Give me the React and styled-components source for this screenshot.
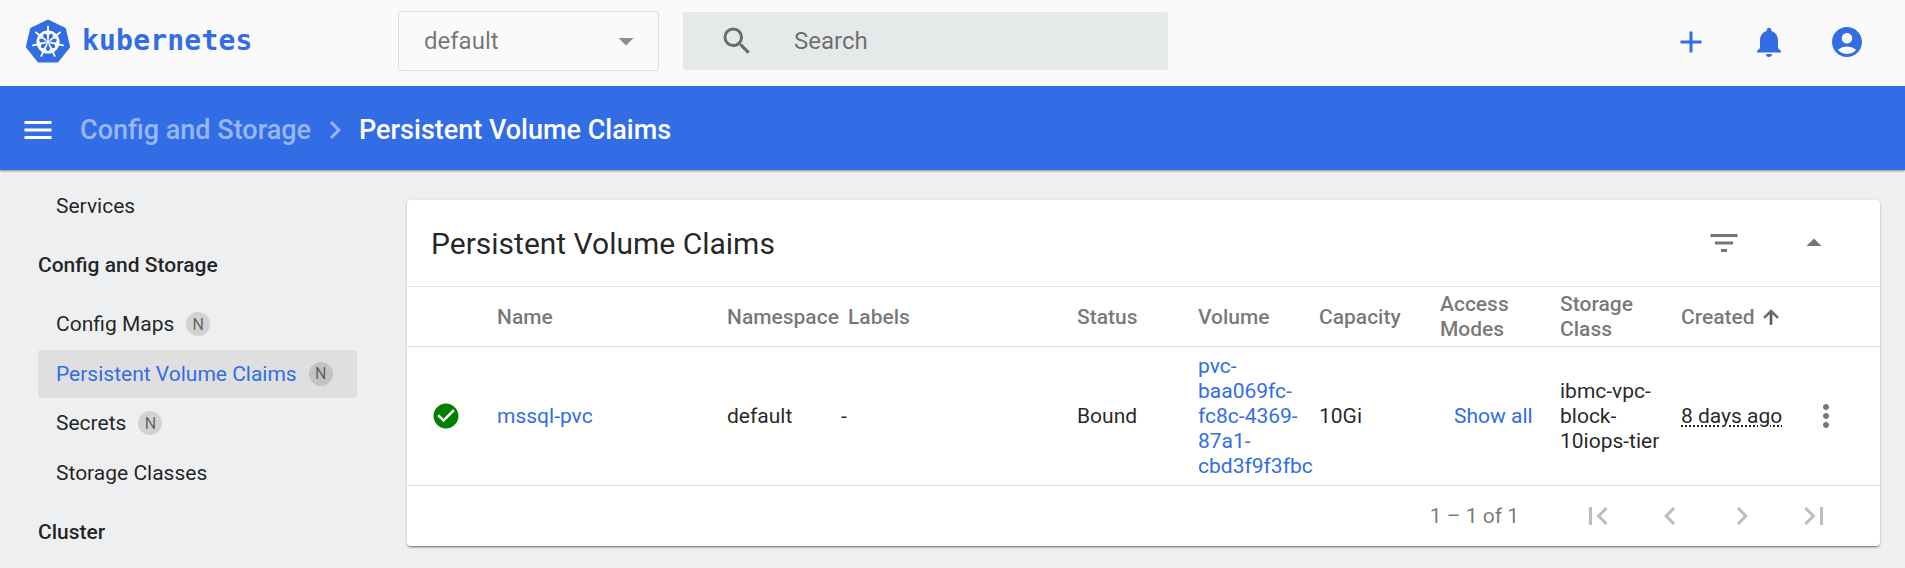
import React from 'react';
import styled, { createGlobalStyle } from 'styled-components';
import {
  MdAdd,
  MdNotifications,
  MdAccountCircle,
  MdFilterList,
  MdArrowDropUp,
  MdArrowDropDown,
  MdFirstPage,
  MdLastPage,
  MdChevronLeft,
  MdChevronRight,
  MdMoreVert,
  MdCheckCircle,
  MdSearch,
  MdMenu,
  MdArrowUpward,
} from 'react-icons/md';

const BLUE = '#326de6';

const GlobalStyle = createGlobalStyle`
  html, body {
    margin: 0;
    padding: 0;
    height: 100%;
    overflow: hidden;
    background: #eeeff1;
    font-family: Roboto, 'Liberation Sans', sans-serif;
    color: rgba(0, 0, 0, 0.87);
  }
  * { box-sizing: border-box; }
`;

const Page = styled.div`
  width: 1905px;
  height: 568px;
  display: flex;
  flex-direction: column;
  overflow: hidden;
`;

const TopBar = styled.header`
  height: 86px;
  flex: none;
  display: flex;
  align-items: center;
  padding: 0 40px 4px 25px;
  background: #fafafa;
`;

const Brand = styled.div`
  width: 373px;
  flex: none;
  display: flex;
  align-items: center;
  gap: 11px;
  color: ${BLUE};
`;

const Wordmark = styled.span`
  font-family: 'DejaVu Sans Mono', monospace;
  font-weight: 700;
  font-size: 28px;
  line-height: 44px;
  letter-spacing: 0.2px;
`;

const NamespaceSelect = styled.div`
  width: 261px;
  height: 60px;
  flex: none;
  display: flex;
  align-items: center;
  justify-content: space-between;
  padding: 0 14px 0 25px;
  border: 1px solid #dcdcdc;
  border-radius: 3px;
  font-size: 24px;
  color: rgba(0, 0, 0, 0.54);
  svg { color: #8f8f8f; }
`;

const SearchBox = styled.div`
  width: 485px;
  height: 58px;
  flex: none;
  margin-left: 24px;
  display: flex;
  align-items: center;
  gap: 39px;
  padding: 0 36px;
  background: #e6e9e9;
  border-radius: 2px;
  font-size: 24px;
  color: rgba(0, 0, 0, 0.54);
`;

const TopActions = styled.div`
  margin: 2px 0 0 auto;
  display: flex;
  gap: 42px;
  color: ${BLUE};
`;

const Crumbs = styled.div`
  height: 84px;
  flex: none;
  display: flex;
  align-items: center;
  padding: 3px 0 0 20px;
  background: ${BLUE};
  color: #fff;
  font-size: 27px;
  font-weight: 500;
  box-shadow: 0 1px 2px rgba(0, 0, 0, 0.45);
  position: relative;
`;

const CrumbParent = styled.span`
  margin-left: 24px;
  color: rgba(255, 255, 255, 0.5);
`;

const CrumbSeparator = styled.span`
  display: flex;
  margin: 0 6px;
  color: rgba(255, 255, 255, 0.5);
`;

const Body = styled.div`
  flex: 1;
  display: flex;
  min-height: 0;
`;

const Sidebar = styled.nav`
  width: 407px;
  flex: none;
  padding: 12px 50px 0 38px;
  display: flex;
  flex-direction: column;
  gap: 1.5px;
`;

const SectionTitle = styled.div`
  height: 48px;
  flex: none;
  margin: 9.5px 0;
  display: flex;
  align-items: center;
  font-size: 21px;
  font-weight: 500;
`;

const NavItem = styled.div`
  height: 48px;
  flex: none;
  display: flex;
  align-items: center;
  gap: 12px;
  padding-left: 18px;
  border-radius: 3px;
  font-size: 21px;
  background: ${(p) => (p.$active ? '#dfdfdf' : 'transparent')};
  color: ${(p) => (p.$active ? BLUE : 'rgba(0, 0, 0, 0.87)')};
`;

const Badge = styled.span`
  width: 24px;
  height: 24px;
  border-radius: 50%;
  display: flex;
  align-items: center;
  justify-content: center;
  background: rgba(0, 0, 0, 0.12);
  color: rgba(0, 0, 0, 0.54);
  font-size: 16px;
`;

const Content = styled.main`
  flex: 1;
  padding: 30px 25px 0 0;
`;

const Card = styled.section`
  height: 346px;
  display: flex;
  flex-direction: column;
  background: #fff;
  border-radius: 4px;
  box-shadow: 0 2px 2px -1px rgba(0, 0, 0, 0.45), 0 1px 3px rgba(0, 0, 0, 0.2);
`;

const CardHeader = styled.div`
  height: 87px;
  flex: none;
  display: flex;
  align-items: center;
  justify-content: space-between;
  padding: 0 48px 0 24px;
  border-bottom: 1px solid #e0e0e0;
`;

const CardTitle = styled.h2`
  margin: 0;
  font-size: 30px;
  font-weight: 400;
`;

const CardActions = styled.div`
  display: flex;
  gap: 54px;
  color: #757575;
`;

const Row = styled.div`
  flex: none;
  height: ${(p) => p.$height}px;
  display: grid;
  grid-template-columns: 90px 230px 121px 229px 121px 121px 121px 120px 122px 126px 36px;
  align-items: center;
  border-bottom: 1px solid #e0e0e0;
  font-size: 21px;
  line-height: 25px;
`;

const HeadRow = styled(Row)`
  padding-top: 1px;
  font-weight: 500;
  color: rgba(0, 0, 0, 0.54);
`;

const SortedHead = styled.span`
  display: flex;
  align-items: center;
  gap: 5px;
  margin-left: -1px;
  svg path:last-child { stroke: currentColor; stroke-width: 1; }
`;

const StatusCell = styled.span`
  display: flex;
  padding-left: 24px;
  color: #008000;
`;

const LinkText = styled.a`
  color: ${BLUE};
  text-decoration: none;
`;

const Dash = styled.span`
  margin-left: -7px;
`;

const ShowAll = styled(LinkText)`
  padding-left: 14px;
  white-space: nowrap;
`;

const StorageClass = styled.span`
  padding-right: 8px;
`;

const Age = styled.span`
  margin-left: -1px;
  text-decoration: underline dotted;
  text-underline-offset: 3px;
`;

const MoreButton = styled.span`
  display: flex;
  color: #757575;
`;

const Pagination = styled.div`
  flex: 1;
  display: flex;
  align-items: center;
  justify-content: flex-end;
  padding-right: 48px;
  font-size: 21px;
  color: rgba(0, 0, 0, 0.54);
`;

const PageRange = styled.span`
  margin-right: 61px;
`;

const PageButtons = styled.div`
  display: flex;
  gap: 36px;
  color: #bdbdbd;
`;

const KubeLogo = () => {
  const spokes = [0, 1, 2, 3, 4, 5, 6].map((i) => (i * 360) / 7);
  return (
    <svg width="46" height="45" viewBox="0 0 46 45" aria-hidden="true">
      <path
        d="M23 2 L39.5 10 L43.6 27.8 L32.2 42 L13.8 42 L2.4 27.8 L6.5 10 Z"
        fill={BLUE}
        stroke={BLUE}
        strokeWidth="3"
        strokeLinejoin="round"
      />
      <circle cx="23" cy="23" r="10.2" fill="none" stroke="#fff" strokeWidth="2.6" />
      <circle cx="23" cy="23" r="2" fill="#fff" />
      {spokes.map((a) => (
        <g key={a} transform={`rotate(${a} 23 23)`}>
          <path d="M23 20 L23 7.5" stroke="#fff" strokeWidth="1.8" strokeLinecap="round" />
          <path d="M23 16.5 L26.6 14.3 L19.4 14.3 Z" fill="#fff" />
        </g>
      ))}
    </svg>
  );
};

const App = () => (
  <Page>
    <GlobalStyle />
    <TopBar>
      <Brand>
        <KubeLogo />
        <Wordmark>kubernetes</Wordmark>
      </Brand>
      <NamespaceSelect>
        default
        <MdArrowDropDown size={36} />
      </NamespaceSelect>
      <SearchBox>
        <MdSearch size={36} />
        Search
      </SearchBox>
      <TopActions>
        <MdAdd size={36} />
        <MdNotifications size={36} />
        <MdAccountCircle size={36} />
      </TopActions>
    </TopBar>

    <Crumbs>
      <MdMenu size={36} />
      <CrumbParent>Config and Storage</CrumbParent>
      <CrumbSeparator>
        <MdChevronRight size={36} />
      </CrumbSeparator>
      <span>Persistent Volume Claims</span>
    </Crumbs>

    <Body>
      <Sidebar>
        <NavItem>Services</NavItem>
        <SectionTitle>Config and Storage</SectionTitle>
        <NavItem>
          Config Maps <Badge>N</Badge>
        </NavItem>
        <NavItem $active>
          Persistent Volume Claims <Badge>N</Badge>
        </NavItem>
        <NavItem>
          Secrets <Badge>N</Badge>
        </NavItem>
        <NavItem>Storage Classes</NavItem>
        <SectionTitle>Cluster</SectionTitle>
      </Sidebar>

      <Content>
        <Card>
          <CardHeader>
            <CardTitle>Persistent Volume Claims</CardTitle>
            <CardActions>
              <MdFilterList size={36} />
              <MdArrowDropUp size={36} />
            </CardActions>
          </CardHeader>

          <HeadRow $height={60}>
            <span />
            <span>Name</span>
            <span>Namespace</span>
            <span>Labels</span>
            <span>Status</span>
            <span>Volume</span>
            <span>Capacity</span>
            <span>Access Modes</span>
            <span>Storage Class</span>
            <SortedHead>
              Created <MdArrowUpward size={22} />
            </SortedHead>
            <span />
          </HeadRow>

          <Row $height={139}>
            <StatusCell>
              <MdCheckCircle size={30} />
            </StatusCell>
            <LinkText href="#">mssql-pvc</LinkText>
            <span>default</span>
            <Dash>-</Dash>
            <span>Bound</span>
            <LinkText href="#">pvc-baa069fc-fc8c-4369-87a1-cbd3f9f3fbc</LinkText>
            <span>10Gi</span>
            <ShowAll href="#">Show all</ShowAll>
            <StorageClass>ibmc-vpc-block-10iops-tier</StorageClass>
            <span>
              <Age>8 days ago</Age>
            </span>
            <MoreButton>
              <MdMoreVert size={36} />
            </MoreButton>
          </Row>

          <Pagination>
            <PageRange>1 – 1 of 1</PageRange>
            <PageButtons>
              <MdFirstPage size={36} />
              <MdChevronLeft size={36} />
              <MdChevronRight size={36} />
              <MdLastPage size={36} />
            </PageButtons>
          </Pagination>
        </Card>
      </Content>
    </Body>
  </Page>
);

export default App;
